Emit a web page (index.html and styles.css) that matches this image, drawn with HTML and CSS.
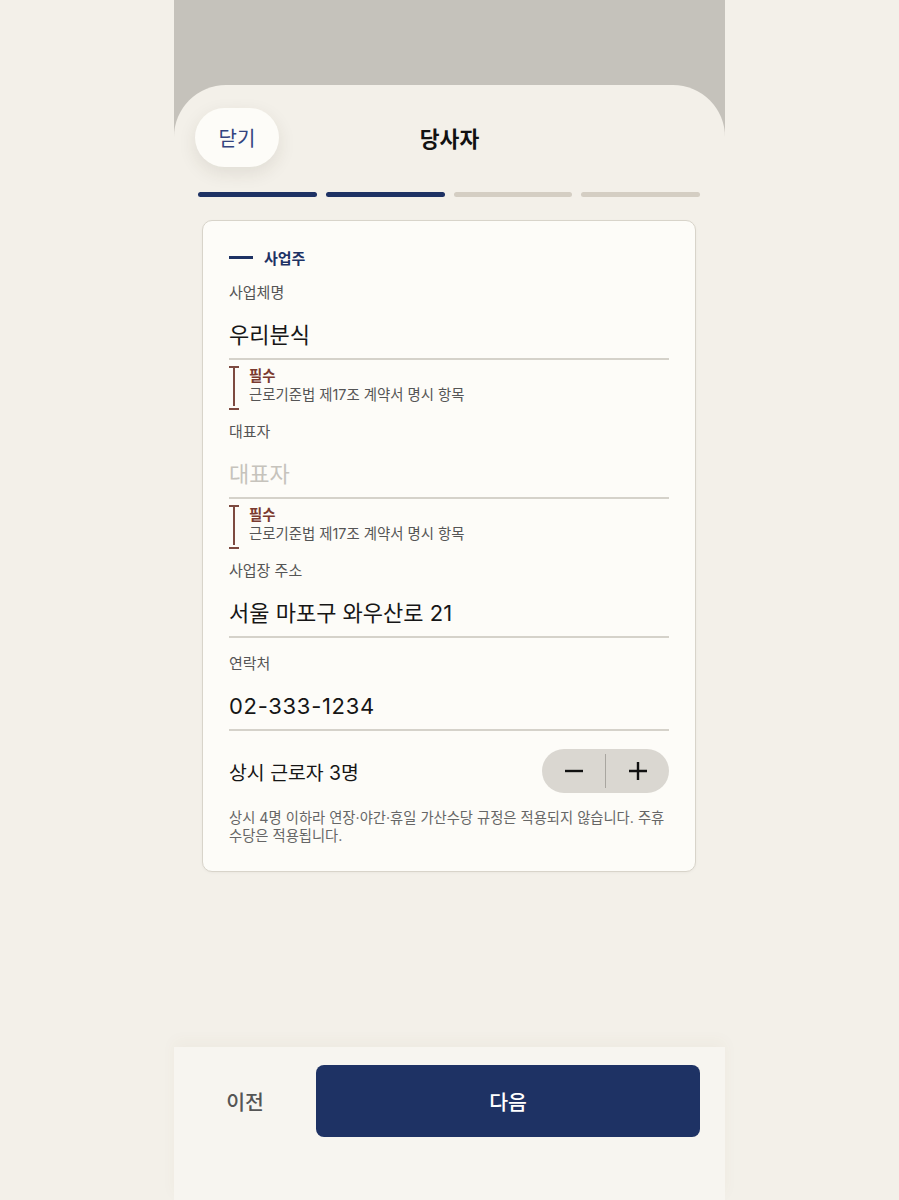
FILE: index.html
```html
<!DOCTYPE html>
<html lang="ko">
<head>
<meta charset="utf-8">
<title>당사자</title>
<link rel="stylesheet" href="styles.css">
</head>
<body>
<div class="app">
  <div class="sheet">
    <header class="header">
      <button class="close-btn">닫기</button>
      <h1 class="title">당사자</h1>
      <span></span>
    </header>
    <div class="progress">
      <span class="seg on"></span>
      <span class="seg on"></span>
      <span class="seg"></span>
      <span class="seg"></span>
    </div>
    <section class="card">
      <div class="section-title"><span class="dash"></span>사업주</div>

      <div class="field first">
        <div class="label">사업체명</div>
        <div class="value">우리분식</div>
      </div>
      <div class="required">
        <span class="bracket"></span>
        <div class="req-text">
          <div class="req-title">필수</div>
          <div class="req-desc">근로기준법 제17조 계약서 명시 항목</div>
        </div>
      </div>

      <div class="field">
        <div class="label">대표자</div>
        <div class="value placeholder">대표자</div>
      </div>
      <div class="required">
        <span class="bracket"></span>
        <div class="req-text">
          <div class="req-title">필수</div>
          <div class="req-desc">근로기준법 제17조 계약서 명시 항목</div>
        </div>
      </div>

      <div class="field">
        <div class="label">사업장 주소</div>
        <div class="value">서울 마포구 와우산로 21</div>
      </div>

      <div class="field">
        <div class="label">연락처</div>
        <div class="value phone">02-333-1234</div>
      </div>

      <div class="count-row">
        <div class="count-label">상시 근로자 3명</div>
        <div class="stepper">
          <button class="step" aria-label="감소">
            <svg width="20" height="20" viewBox="0 0 20 20"><path d="M1 10H19" stroke="#111" stroke-width="2.4" stroke-linecap="butt"/></svg>
          </button>
          <span class="step-divider"></span>
          <button class="step" aria-label="증가">
            <svg width="20" height="20" viewBox="0 0 20 20"><path d="M1 10H19M10 1V19" stroke="#111" stroke-width="2.4" stroke-linecap="butt"/></svg>
          </button>
        </div>
      </div>
      <p class="note">상시 4명 이하라 연장·야간·휴일 가산수당 규정은 적용되지 않습니다. 주휴 수당은 적용됩니다.</p>
    </section>
    <div class="spacer"></div>
    <footer class="footer">
      <button class="prev">이전</button>
      <button class="next">다음</button>
    </footer>
  </div>
</div>
</body>
</html>
```

FILE: styles.css
```css
* { box-sizing: border-box; }
html, body { margin: 0; padding: 0; }
body {
  background: #f3f0e9;
  font-family: "Inter", "Noto Sans CJK KR", sans-serif;
  color: #1a1a1a;
}
button {
  font-family: inherit;
  border: none;
  background: none;
  padding: 0;
  cursor: pointer;
}
.app {
  width: 551px;
  margin: 0 auto;
  min-height: 1200px;
  display: flex;
  flex-direction: column;
  background: linear-gradient(#c5c2bb 0, #c5c2bb 150px, #f3f0e9 150px);
}
.sheet {
  margin-top: 85px;
  flex: 1;
  display: flex;
  flex-direction: column;
  background: #f3f0e9;
  border-radius: 52px 52px 0 0;
}
.header {
  display: grid;
  grid-template-columns: 1fr auto 1fr;
  align-items: center;
  padding: 23px 21px 0;
  height: 82px;
}
.close-btn {
  justify-self: start;
  width: 84px;
  height: 59px;
  border-radius: 30px;
  background: #fdfcf8;
  color: #33447f;
  font-size: 20px;
  box-shadow: 0 6px 18px rgba(60, 50, 30, 0.10);
}
.title {
  margin: 0;
  font-size: 21.5px;
  font-weight: 700;
  color: #111;
}
.progress {
  display: flex;
  gap: 9px;
  padding: 0 25px 0 24px;
  margin-top: 25px;
}
.seg {
  flex: 1;
  height: 5px;
  border-radius: 3px;
  background: #d4cec3;
}
.seg.on { background: #1e3264; }
.card {
  margin: 23px 29px 0 28px;
  background: #fdfcf8;
  border: 1px solid #d8d4ca;
  border-radius: 10px;
  padding: 26px 26px 26px 26px;
  box-shadow: 0 1px 3px rgba(0, 0, 0, 0.04);
}
.section-title {
  display: flex;
  align-items: center;
  gap: 11px;
  height: 20px;
  font-size: 15px;
  font-weight: 700;
  color: #1e3264;
}
.dash {
  width: 24px;
  height: 3px;
  background: #1e3264;
}
.field { margin-top: 15px; }
.field.first { margin-top: 15px; }
.label {
  height: 22px;
  line-height: 22px;
  font-size: 15px;
  color: #555;
}
.value {
  margin-top: 10px;
  height: 46px;
  line-height: 42px;
  padding-bottom: 2px;
  font-size: 22px;
  color: #161616;
  border-bottom: 2px solid #d5d2ca;
}
.value.phone { letter-spacing: 0.7px; }
.value.placeholder { color: #c6c3bc; }
.required {
  display: flex;
  gap: 10px;
  margin-top: 6px;
  height: 40px;
}
.bracket {
  position: relative;
  width: 10px;
  height: 40px;
  flex: none;
}
.bracket::before {
  content: "";
  position: absolute;
  left: 4px;
  top: 0;
  width: 2px;
  height: 40px;
  background: #7d4a40;
}
.bracket::after {
  content: "";
  position: absolute;
  left: 0;
  top: 0;
  width: 10px;
  height: 40px;
  border-top: 2px solid #7d4a40;
  border-bottom: 2px solid #7d4a40;
}
.req-title {
  height: 19px;
  line-height: 19px;
  font-size: 14.4px;
  font-weight: 700;
  color: #7a3a30;
}
.req-desc {
  height: 19px;
  line-height: 19px;
  font-size: 14.4px;
  color: #555;
}
.count-row {
  margin-top: 18px;
  display: flex;
  align-items: center;
  justify-content: space-between;
}
.count-label {
  font-size: 19.4px;
  color: #161616;
}
.stepper {
  display: flex;
  align-items: center;
  width: 127px;
  height: 44px;
  border-radius: 22px;
  background: #dad7d1;
}
.step {
  flex: 1;
  height: 44px;
  display: flex;
  align-items: center;
  justify-content: center;
}
.step-divider {
  width: 1px;
  height: 34px;
  background: #a9a6a0;
}
.note {
  margin: 16px 0 0;
  font-size: 14.3px;
  line-height: 18px;
  color: #666;
}
.spacer { flex: 1; }
.footer {
  display: flex;
  align-items: flex-start;
  height: 153px;
  padding: 18px 25px 0 0;
  background: #f7f5f0;
  box-shadow: 0 -6px 14px rgba(120, 100, 60, 0.04);
}
.prev {
  width: 142px;
  height: 72px;
  font-size: 20.5px;
  font-weight: 500;
  color: #555;
}
.next {
  flex: 1;
  height: 72px;
  border-radius: 8px;
  background: #1e3264;
  color: #fff;
  font-size: 20.5px;
  font-weight: 500;
}
```
